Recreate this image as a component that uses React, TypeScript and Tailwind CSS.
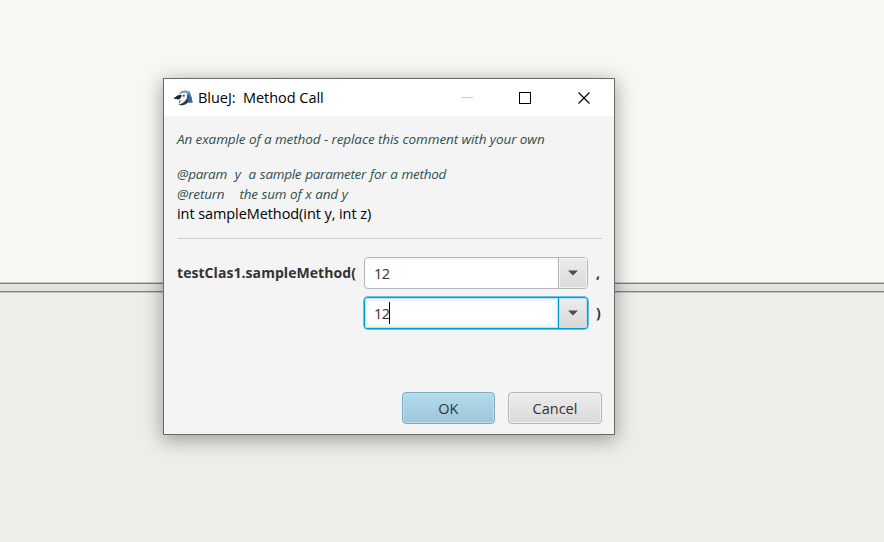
import React from "react";

const FONT = "font-['Open_Sans','Noto_Sans',sans-serif]";

function JayLogo() {
  return (
    <svg width="20" height="16" viewBox="0 0 20 16" className="shrink-0">
      <path d="M5.5 5 C6.5 2 9.5 0.6 13 0.6 L16.6 1.4 L18.2 6 L19.6 12.4 L13 12.6 L8 5 Z" fill="#4c78a8" />
      <path d="M7.5 2.6 C10 0.6 14 0.6 16.4 1.6 L16.8 3.6 L13 3 Z" fill="#79a9d0" />
      <path d="M5.5 5 C7.5 2.8 11 2.3 14.4 3.4 L13.8 8.6 L10.5 13.2 L5.6 14.6 L7 9 Z" fill="#f2f4f5" />
      <path d="M0.2 8.4 L5 5.2 L9 5 L8.2 7 L6.8 8.8 L5.6 9.6 Z" fill="#1e2326" />
      <path d="M14.2 3.2 C15.2 5.4 15 8.4 12.6 10.8 L9 13.6 L5.4 14.4 L8.8 15.6 L13 14.2 L15.6 11.6 L15.8 6 Z" fill="#2d3740" />
      <path d="M6.4 10.6 L7.4 9.6 L7.2 12.4 L5.8 13.6 Z" fill="#56626b" />
      <path d="M10 4.8 L12 5.2 L11.4 6.8 L9.8 6.4 Z" fill="#39444d" />
      <path d="M15.4 7.4 L18.4 6.8 L19.6 12.4 L14.4 12.8 Z" fill="#41699b" />
    </svg>
  );
}

function TitleBar() {
  return (
    <div className="flex h-[37px] items-center bg-white pl-[9px] text-black">
      <JayLogo />
      <span className="ml-[5px] w-[240px] whitespace-pre text-[14.5px] leading-5 tracking-[-0.04px]">{"BlueJ:  Method Call"}</span>
      <div className="ml-auto flex items-center pr-[24px]">
        <svg width="129" height="12" viewBox="0 0 129 12" shapeRendering="crispEdges">
          <rect x="0" y="5" width="12" height="1" fill="#cccccc" />
          <rect x="58.5" y="0.5" width="11" height="11" fill="none" stroke="#000" />
          <path d="M117.5 0.5 L128.5 11.5 M128.5 0.5 L117.5 11.5" stroke="#000" strokeWidth="1.1" shapeRendering="auto" />
        </svg>
      </div>
    </div>
  );
}

function Combo({ focused = false }: { focused?: boolean }) {
  return (
    <div
      className={
        focused
          ? "flex h-8 w-[224px] overflow-hidden rounded-[4px] border border-[#039ed3] bg-white shadow-[0_0_0_0.5px_#039ed3,0_0_0_1px_#c5e6f1]"
          : "flex h-8 w-[224px] overflow-hidden rounded-[4px] border border-[#b5b5b5] bg-white"
      }
    >
      <div
        className={
          focused
            ? "flex flex-1 items-center pl-[9px] shadow-[inset_0_0_0_1px_#b9e2f1,inset_0_0_0_3px_#f2f8fa]"
            : "flex flex-1 items-center pl-[9px] shadow-[inset_0_1px_2px_#ececec]"
        }
      >
        <span className="pt-px text-[14.5px] leading-5 tracking-[-0.6px] text-[#333333]">12</span>
        {focused && <span className="h-[22px] w-px bg-black" />}
      </div>
      <div
        className={
          focused
            ? "flex w-[29px] items-center justify-center border-l border-[#039ed3] bg-linear-to-b from-[#ececec] to-[#d9d9d9] shadow-[inset_0_0_0_1px_#b9dfed]"
            : "flex w-[29px] items-center justify-center border-l border-[#b5b5b5] bg-linear-to-b from-[#ececec] to-[#dadada] shadow-[inset_0_0_0_1px_#f2f2f2]"
        }
      >
        <svg width="10" height="6" viewBox="0 0 10 6">
          <path d="M0 0.5 H10 L5 5.5 Z" fill="#4c4c4c" />
        </svg>
      </div>
    </div>
  );
}

export default function App() {
  return (
    <div className={`relative flex h-[542px] w-[884px] flex-col overflow-hidden bg-[#eeede8] ${FONT}`}>
      <div className="h-[282px] bg-[#f8f7f2]" />
      <div className="h-[11px] border-y border-[#c5c5c3] bg-[#e2e2e2]">
        <div className="h-[9px] border-y border-[#7f7f82]" />
      </div>

      <div className="absolute left-[163px] top-[78px] flex h-[357px] w-[452px] flex-col border border-[#696969] bg-[#f4f4f4] shadow-[0_4px_18px_1px_rgba(0,0,0,0.34)]">
        <TitleBar />
        <div className="flex flex-1 flex-col pl-[13px] pr-3 pt-[13px]">
          <div className="whitespace-pre text-[13.5px] italic leading-5 text-[#2f4f4f]">
            <p className="tracking-[-0.09px]">An example of a method - replace this comment with your own</p>
            <p className="mt-[15px] tracking-[-0.28px] [word-spacing:0.7px]">{"@param  y  a sample parameter for a method"}</p>
            <p className="tracking-[-0.2px] [word-spacing:0.45px]">{"@return    the sum of x and y"}</p>
          </div>
          <p className="text-[14.5px] leading-5 tracking-[-0.08px] text-black">int sampleMethod(int y, int z)</p>
          <div className="mt-[14px] h-px bg-[#cccccc]" />
          <div className="mt-[18px] grid grid-cols-[187px_224px_1fr] gap-y-2 text-[14px] font-bold leading-8 text-[#333333]">
            <span className="whitespace-nowrap tracking-[0.06px]">testClas1.sampleMethod(</span>
            <div className="font-normal"><Combo /></div>
            <span className="pl-2">,</span>
            <span />
            <div className="font-normal"><Combo focused /></div>
            <span className="pl-2">)</span>
          </div>
          <div className="mb-[10px] mt-auto flex justify-end gap-[13px] text-[14.5px] text-[#333333]">
            <button className="h-8 w-[93.5px] rounded-[4px] border border-[#7fa9bc] bg-linear-to-b from-[#b3dcec] to-[#9cc6d9] pt-px tracking-[-0.2px] shadow-[inset_0_0_0_1px_#bfe0ed]">OK</button>
            <button className="h-8 w-[94px] rounded-[4px] border border-[#b5b5b5] bg-linear-to-b from-[#ececec] to-[#dadada] pt-px shadow-[inset_0_0_0_1px_#f0f0f0]">Cancel</button>
          </div>
        </div>
      </div>
    </div>
  );
}
